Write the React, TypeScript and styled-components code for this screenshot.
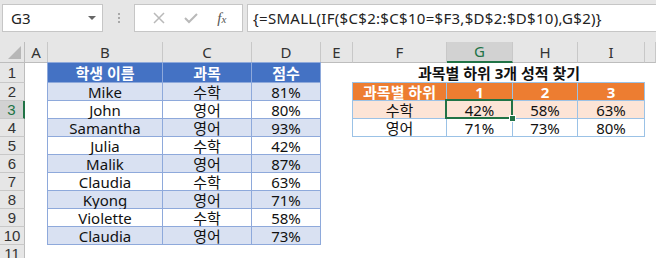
import React from 'react';
import styled, { createGlobalStyle } from 'styled-components';

const GlobalStyle = createGlobalStyle`
  html, body {
    margin: 0;
    padding: 0;
    background: #e6e6e6;
  }
  body {
    font-family: "Noto Sans", "Noto Sans CJK KR", sans-serif;
    overflow: hidden;
  }
`;

const Page = styled.div`
  width: 656px;
  height: 258px;
  display: flex;
  flex-direction: column;
  background: #e6e6e6;
  overflow: hidden;
`;

const Toolbar = styled.div`
  height: 42px;
  flex-shrink: 0;
  display: flex;
  align-items: flex-start;
  padding: 4px 0 0 2px;
  box-sizing: border-box;
`;

const NameBox = styled.div`
  width: 101px;
  height: 28px;
  box-sizing: border-box;
  background: #fff;
  border: 1px solid #c6c6c6;
  display: flex;
  align-items: center;
  justify-content: space-between;
  padding: 0 6px 0 8px;
  font-size: 15px;
  color: #222;
`;

const DropArrow = styled.span`
  width: 0;
  height: 0;
  border-left: 4px solid transparent;
  border-right: 4px solid transparent;
  border-top: 4px solid #666;
`;

const Grip = styled.div`
  width: 31px;
  height: 28px;
  display: flex;
  flex-direction: column;
  align-items: center;
  justify-content: center;
  gap: 2px;

  span {
    width: 2px;
    height: 2px;
    background: #a8a8a8;
  }
`;

const FormulaButtons = styled.div`
  width: 109px;
  height: 28px;
  box-sizing: border-box;
  background: #fff;
  border: 1px solid #c6c6c6;
  display: flex;
  align-items: center;
  justify-content: space-around;
  padding: 0 6px 0 8px;
`;

const ToolIcon = styled.span`
  display: flex;
  align-items: center;
`;

const FxIcon = styled.span`
  font-family: "Liberation Serif", serif;
  font-style: italic;
  font-size: 15px;
  color: #555;

  sub {
    font-size: 11px;
    vertical-align: baseline;
  }
`;

const FormulaInput = styled.div`
  flex: 1;
  height: 28px;
  margin-left: 4px;
  margin-right: -4px;
  box-sizing: border-box;
  background: #fff;
  border: 1px solid #c6c6c6;
  display: flex;
  align-items: center;
  padding-left: 5px;
  font-size: 15px;
  letter-spacing: 0.3px;
  color: #222;
  white-space: nowrap;
  overflow: hidden;
`;

const Sheet = styled.div`
  flex: 1;
  min-height: 0;
  overflow: hidden;
  display: grid;
  grid-template-columns: 25px 23px 115px 89px 69px 32px 94px 66px 65px 67px 1fr;
  grid-template-rows: 21px 20px repeat(9, 18px) 18px;
  background: #fff;
  line-height: 1;
`;

const Corner = styled.div`
  background: #e6e6e6;
  border-right: 1px solid #bdbdbd;
  border-bottom: 1px solid #bdbdbd;
  box-sizing: border-box;
  position: relative;

  &::after {
    content: '';
    position: absolute;
    right: 3px;
    bottom: 3px;
    border-left: 13px solid transparent;
    border-bottom: 13px solid #b7b7b7;
  }
`;

const ColHeader = styled.div<{ $selected?: boolean }>`
  background: ${({ $selected }) => ($selected ? '#d2d2d2' : '#e6e6e6')};
  color: ${({ $selected }) => ($selected ? '#217346' : '#333')};
  border-right: 1px solid #c8c8c8;
  border-bottom: ${({ $selected }) => ($selected ? '2px solid #217346' : '1px solid #bdbdbd')};
  box-sizing: border-box;
  display: flex;
  align-items: center;
  justify-content: center;
  font-size: 15px;
`;

const RowHeader = styled.div<{ $selected?: boolean }>`
  background: ${({ $selected }) => ($selected ? '#d2d2d2' : '#e6e6e6')};
  color: ${({ $selected }) => ($selected ? '#217346' : '#333')};
  border-right: ${({ $selected }) => ($selected ? '2px solid #217346' : '1px solid #bdbdbd')};
  border-bottom: 1px solid #c8c8c8;
  box-sizing: border-box;
  display: flex;
  align-items: center;
  justify-content: center;
  font-family: "Liberation Sans", sans-serif;
  font-size: 15px;
`;

type Kind = 'blank' | 'blueHead' | 'blueBand' | 'blueRow' | 'title' | 'orangeHead' | 'orangeBand' | 'orangeRow';

const fills: Record<Kind, string> = {
  blank: '#fff',
  blueHead: '#4472c4',
  blueBand: '#d9e1f2',
  blueRow: '#fff',
  title: '#fff',
  orangeHead: '#ed7d31',
  orangeBand: '#fce4d6',
  orangeRow: '#fff',
};

const lines: Partial<Record<Kind, string>> = {
  blueHead: '#8ea9db',
  blueBand: '#8ea9db',
  blueRow: '#8ea9db',
  orangeHead: '#9bc2e6',
  orangeBand: '#9bc2e6',
  orangeRow: '#9bc2e6',
};

const Cell = styled.div<{ $kind: Kind; $span?: number; $left?: boolean; $top?: boolean; $selected?: boolean }>`
  grid-column: span ${({ $span }) => $span || 1};
  background: ${({ $kind }) => fills[$kind]};
  color: ${({ $kind }) => ($kind === 'blueHead' || $kind === 'orangeHead' ? '#fff' : '#111')};
  font-weight: ${({ $kind }) => ($kind === 'blueHead' || $kind === 'orangeHead' || $kind === 'title' ? 700 : 400)};
  font-size: 15px;
  box-sizing: border-box;
  border-right: ${({ $kind }) => (lines[$kind] ? `1px solid ${lines[$kind]}` : 'none')};
  border-bottom: ${({ $kind }) => (lines[$kind] ? `1px solid ${lines[$kind]}` : 'none')};
  border-left: ${({ $kind, $left }) => ($left && lines[$kind] ? `1px solid ${lines[$kind]}` : 'none')};
  border-top: ${({ $kind, $top }) => ($top && lines[$kind] ? `1px solid ${lines[$kind]}` : 'none')};
  margin-left: ${({ $left }) => ($left ? '-1px' : '0')};
  margin-top: ${({ $top }) => ($top ? '-1px' : '0')};
  display: flex;
  align-items: center;
  justify-content: center;
  padding-top: 1px;
  white-space: nowrap;
  position: relative;

  ${({ $selected }) =>
    $selected &&
    `
    &::after {
      content: '';
      position: absolute;
      inset: -2px -1px -1px -2px;
      border: 2px solid #217346;
    }
    &::before {
      content: '';
      position: absolute;
      right: -4px;
      bottom: -4px;
      width: 5px;
      height: 5px;
      background: #217346;
      border: 1px solid #fff;
      z-index: 2;
    }
  `}
`;

const columns = ['A', 'B', 'C', 'D', 'E', 'F', 'G', 'H', 'I', ''];

const students = [
  ['Mike', '수학', '81%'],
  ['John', '영어', '80%'],
  ['Samantha', '영어', '93%'],
  ['Julia', '수학', '42%'],
  ['Malik', '영어', '87%'],
  ['Claudia', '수학', '63%'],
  ['Kyong', '영어', '71%'],
  ['Violette', '수학', '58%'],
  ['Claudia', '영어', '73%'],
];

const lowest: string[][] = [
  ['과목별 하위', '1', '2', '3'],
  ['수학', '42%', '58%', '63%'],
  ['영어', '71%', '73%', '80%'],
];

const renderRow = (r: number) => {
  const cells: React.ReactNode[] = [];
  cells.push(<RowHeader key="h" $selected={r === 3}>{r}</RowHeader>);
  cells.push(<Cell key="A" $kind="blank" />);

  // left table: B..D
  const leftKind: Kind = r === 1 ? 'blueHead' : r % 2 === 0 ? 'blueBand' : 'blueRow';
  const leftValues = r === 1 ? ['학생 이름', '과목', '점수'] : students[r - 2];
  if (r <= 10) {
    leftValues.forEach((v, i) => (
      cells.push(<Cell key={'L' + i} $kind={leftKind} $left={i === 0} $top={r === 1}>{v}</Cell>)
    ));
  } else {
    ['B', 'C', 'D'].forEach((c) => cells.push(<Cell key={c} $kind="blank" />));
  }

  cells.push(<Cell key="E" $kind="blank" />);

  // right table: F..I
  if (r === 1) {
    cells.push(<Cell key="T" $kind="title" $span={4}>과목별 하위 3개 성적 찾기</Cell>);
  } else if (r >= 2 && r <= 4) {
    const kind: Kind = r === 2 ? 'orangeHead' : r === 3 ? 'orangeBand' : 'orangeRow';
    lowest[r - 2].forEach((v, i) => (
      cells.push(
        <Cell key={'R' + i} $kind={kind} $left={i === 0} $top={r === 2} $selected={r === 3 && i === 1}>
          {v}
        </Cell>
      )
    ));
  } else {
    ['F', 'G', 'H', 'I'].forEach((c) => cells.push(<Cell key={c} $kind="blank" />));
  }

  cells.push(<Cell key="J" $kind="blank" />);
  return cells;
};

const App: React.FC = () => {
  const rows = Array.from({ length: 11 }, (_, i) => i + 1);

  return (
    <Page>
      <GlobalStyle />
      <Toolbar>
        <NameBox>
          G3
          <DropArrow />
        </NameBox>
        <Grip>
          <span />
          <span />
          <span />
        </Grip>
        <FormulaButtons>
          <ToolIcon>
            <svg width="12" height="12" viewBox="0 0 12 12">
              <path d="M1 1 L11 11 M11 1 L1 11" stroke="#b9b9b9" strokeWidth="1.5" />
            </svg>
          </ToolIcon>
          <ToolIcon>
            <svg width="14" height="12" viewBox="0 0 14 12">
              <path d="M1 6 L5 10 L13 2" stroke="#b9b9b9" strokeWidth="2" fill="none" />
            </svg>
          </ToolIcon>
          <FxIcon>
            f<sub>x</sub>
          </FxIcon>
        </FormulaButtons>
        <FormulaInput>{'{=SMALL(IF($C$2:$C$10=$F3,$D$2:$D$10),G$2)}'}</FormulaInput>
      </Toolbar>
      <Sheet>
        <Corner />
        {columns.map((c) => (
          <ColHeader key={c || 'J'} $selected={c === 'G'}>{c}</ColHeader>
        ))}
        {rows.map((r) => (
          <React.Fragment key={r}>{renderRow(r)}</React.Fragment>
        ))}
      </Sheet>
    </Page>
  );
};

export default App;
